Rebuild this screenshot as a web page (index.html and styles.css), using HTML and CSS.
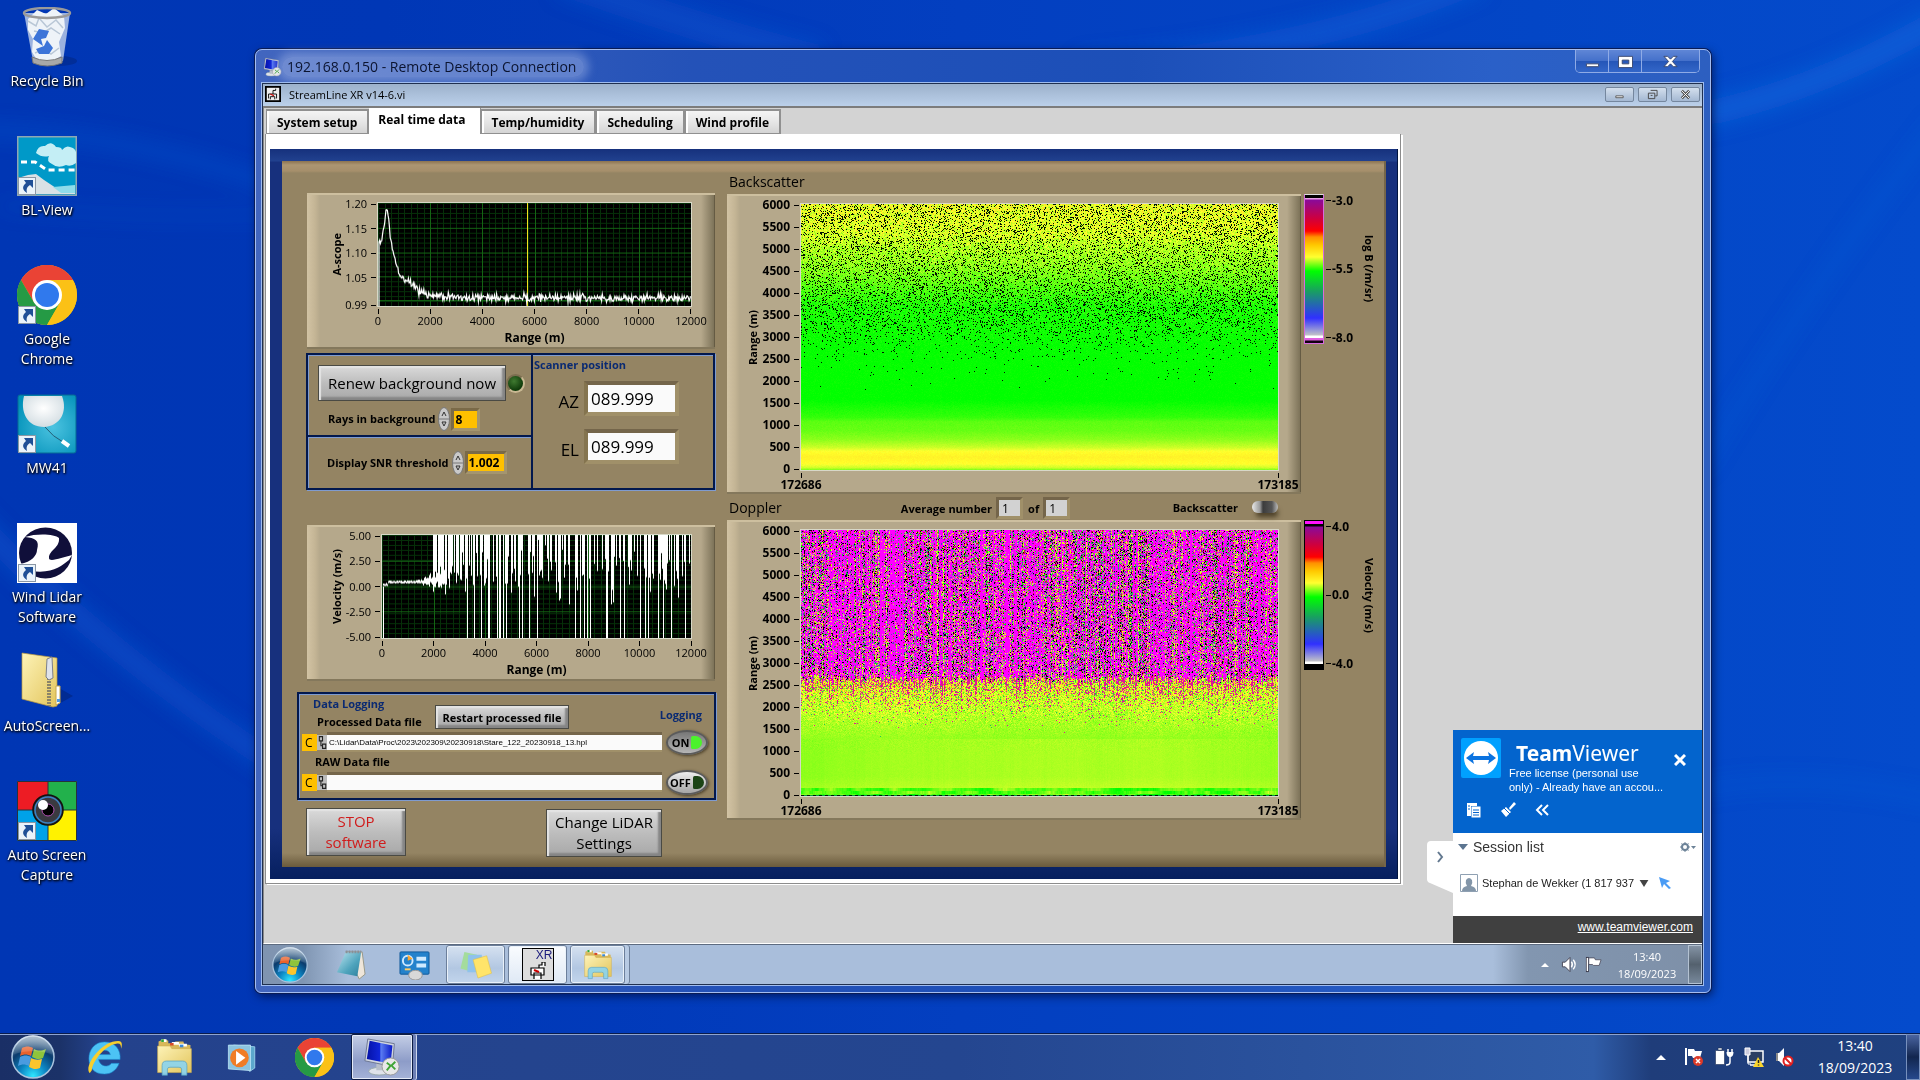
FILE: index.html
```html
<!DOCTYPE html>
<html lang="en">
<head>
<meta charset="utf-8">
<title>Remote Desktop Connection</title>
<link rel="stylesheet" href="styles.css">
</head>
<body>
<svg class="defs" aria-hidden="true">
  <defs>
    <radialGradient id="gOrb" cx=".5" cy=".95" r=".9"><stop offset="0" stop-color="#2fe6ff"/><stop offset=".35" stop-color="#0c86c4"/><stop offset=".7" stop-color="#0b3c6e"/><stop offset="1" stop-color="#5d7f9f"/></radialGradient>
    <linearGradient id="gGloss" x1="0" y1="0" x2="0" y2="1"><stop offset="0" stop-color="#fff" stop-opacity=".75"/><stop offset="1" stop-color="#fff" stop-opacity=".1"/></linearGradient>
    <linearGradient id="gFold" x1="0" y1="0" x2="1" y2="1"><stop offset="0" stop-color="#fdf3b8"/><stop offset="1" stop-color="#e3c55c"/></linearGradient>
    <linearGradient id="gScr" x1="0" y1="0" x2="1" y2="0"><stop offset="0" stop-color="#0512a8"/><stop offset=".5" stop-color="#1026d8"/><stop offset=".55" stop-color="#5b7df2"/><stop offset="1" stop-color="#0a1ac8"/></linearGradient>
    <linearGradient id="gPad" x1="0" y1="0" x2="1" y2="1"><stop offset="0" stop-color="#bfe6f0"/><stop offset=".6" stop-color="#4fa4bd"/><stop offset="1" stop-color="#2c7f9c"/></linearGradient>
    <radialGradient id="gBall" cx=".5" cy=".4" r=".6"><stop offset="0" stop-color="#fff"/><stop offset="1" stop-color="#d3dde2"/></radialGradient>
    <radialGradient id="gTeal" cx=".6" cy=".55" r=".7"><stop offset="0" stop-color="#4cc3e0"/><stop offset="1" stop-color="#0090b8"/></radialGradient>
  </defs>
  <symbol id="orb" viewBox="0 0 44 44">
    <circle cx="22" cy="22" r="21" fill="url(#gOrb)" stroke="#a9c3dd" stroke-width="1.5"/>
    <path d="M11 13c4-2 7-2 11 0l-2 8c-4-2-7-2-11 0z" fill="#e8622c"/>
    <path d="M23 14c4 2 7 2 12 0l-3 9c-4 2-7 1-11-1z" fill="#8fc43c"/>
    <path d="M9 22c4-2 7-2 11 0l-2 9c-4-2-7-2-11 0z" fill="#4a9be0"/>
    <path d="M20 23c4 2 7 2 11 1l-2 9c-4 2-7 1-11-1z" fill="#fcc52c"/>
    <path d="M2 20a20 20 0 0 1 40 0c-10-5-30-5-40 0z" fill="url(#gGloss)" opacity=".7"/>
  </symbol>
  <symbol id="folder" viewBox="0 0 40 44">
    <path d="M2 8V4l6-3 5 2v3h7l1-2h9l1 3 7 1v30H2z" fill="#d8b85a"/>
    <path d="M5 3h6M17 6h8M25 8h9" stroke="#fff" stroke-width="3"/><path d="M5 3h3" stroke="#2fa83a" stroke-width="3"/><path d="M15 7h4" stroke="#d84a2a" stroke-width="3"/><path d="M26 9h4" stroke="#3a8ad8" stroke-width="3"/>
    <path d="M1 9h14l2 3h22v27H1z" fill="url(#gFold)" stroke="#cfae50" stroke-width=".7"/>
    <path d="M6 42V31q0-5 5-5h18q5 0 5 5v11h-6v-7q0-2-3-2H15q-3 0-3 2v7z" fill="#8fd4ea" stroke="#4f9dc0" stroke-width=".8" opacity=".95"/>
  </symbol>
  <symbol id="chrome" viewBox="0 0 60 60">
    <circle cx="30" cy="30" r="30" fill="#fbc116"/>
    <path d="M4 15A30 30 0 0 1 56 15H30L17 37.500z" fill="#ea4335"/>
    <path d="M4 15A30 30 0 0 0 30 60L43 37.500 30 45 17 37.500z" fill="#259a45"/>
    <path d="M56 15H30l13 22.500L30 60A30 30 0 0 0 56 15z" fill="#fbc116"/>
    <circle cx="30" cy="30" r="15" fill="#fff"/><circle cx="30" cy="30" r="12" fill="#3079ed"/>
  </symbol>
  <symbol id="rdp" viewBox="0 0 40 40">
    <ellipse cx="17" cy="35" rx="11" ry="4" fill="#dfe3ea" stroke="#9aa"/>
    <path d="M14 26h7l2 8h-9z" fill="#b8bfca"/>
    <path d="M5 1l28 5-2 24L2 24z" fill="#cfd5e0" stroke="#6b7691"/>
    <path d="M7 3l24 5-2 19L4 22z" fill="url(#gScr)"/>
    <circle cx="29" cy="30" r="9" fill="#e8e8e8" stroke="#999"/>
    <path d="M25 26l4 3-4 5M34 25l-4 4 4 4" fill="none" stroke="#3fa535" stroke-width="2"/>
  </symbol>
  <symbol id="shortcut" viewBox="0 0 18 18">
    <rect x=".5" y=".5" width="17" height="17" fill="#eaf3fa" stroke="#8a97a5"/>
    <path d="M6 3h9v8l-3-3c-3 2-4 4-3 8-5-3-5-7-1-10z" fill="#1f4f96"/>
  </symbol>
</svg>

<div class="desktop">
  <svg class="wallpaper" viewBox="0 0 1920 1033" preserveAspectRatio="none" aria-hidden="true">
    <defs>
      <linearGradient id="wGlow" x1="0" y1="0" x2="1" y2="0"><stop offset="0" stop-color="#0036b4"/><stop offset=".2" stop-color="#0037b6"/><stop offset=".5" stop-color="#033fc0"/><stop offset=".8" stop-color="#0346c6"/><stop offset="1" stop-color="#044bcc"/></linearGradient>
      <filter id="soft"><feGaussianBlur stdDeviation="10"/></filter>
    </defs>
    <rect width="1920" height="1033" fill="url(#wGlow)"/>
    <g fill="none" stroke="#1464dc" filter="url(#soft)">
      <path d="M-40 505Q110 660 300 780" stroke-width="22" opacity=".4"/>
      <path d="M-40 130Q130 130 300 195" stroke-width="12" opacity=".35"/>
      <path d="M0 205Q130 220 300 214" stroke-width="6" opacity=".25"/>
      <path d="M560 -20Q700 30 820 60" stroke-width="30" opacity=".3"/>
      <path d="M1080 70Q1320 50 1480 -20" stroke-width="24" opacity=".5"/>
      <path d="M1700 115Q1820 90 1940 20" stroke-width="24" opacity=".7"/>
      <path d="M1700 470Q1800 300 1940 120" stroke-width="10" opacity=".3"/>
      <path d="M1700 790Q1800 770 1940 800" stroke-width="8" opacity=".4"/>
    </g>
  </svg>

  <nav class="icons" aria-label="Desktop">
    <a class="icon" href="#"><span class="pic"><svg viewBox="0 0 60 60"><ellipse cx="42" cy="54" rx="18" ry="5" fill="#02216e" opacity=".4"/><path d="M7 6h46l-7 48q-16 7-30 0z" fill="#b6c8e6" opacity=".85"/><path d="M11 12l9-9 9 4 8-6 10 8 1 12-6 14 2 14-11 7-12-1-6-10 1-13-5-9z" fill="#eef3f8"/><path d="M11 14l8 5 3-8 8 9 9-7 7 8M17 24l9 2 8-5 9 6M18 46l9-4 7 5 8-6" fill="none" stroke="#b9c7d6" stroke-width="1.500"/><path d="M16 32l6-10 10 2-3 7-5 1 2 7zM27 39l3-6 6 8-4 6-10 0-3-5z" fill="#3c74d8"/><ellipse cx="30" cy="6" rx="23" ry="5" fill="none" stroke="#9a9a9a" stroke-width="2.500"/><path d="M15 50q15 7 30 0v6q-15 6-29 0z" fill="#a8a8a8" stroke="#777"/></svg></span><span class="name">Recycle Bin</span></a>
    <a class="icon" href="#"><span class="pic"><svg viewBox="0 0 60 60"><rect width="60" height="60" fill="#8fa7b3"/><rect x="1.500" y="1.500" width="57" height="57" fill="#0099c8"/><path d="M19 17q2-8 9-7 6-6 11 1 6 0 6 3 4-5 8-3 5 1 6 5v11q-5 4-10 2-8 4-14-1-6-3-3-8-7 2-13-3z" fill="#c4eef5"/><path d="M4 26h14l12 8h28" fill="none" stroke="#fff" stroke-width="3" stroke-dasharray="6 4"/><path d="M1 42l10-3 8-1 8 6 12 8 19-2v8H1z" fill="#d9e1e5"/><path d="M36 51l22-2v8H44z" fill="#8fdcea"/></svg><svg class="cut"><use href="#shortcut"/></svg></span><span class="name">BL-View</span></a>
    <a class="icon" href="#"><span class="pic"><svg><use href="#chrome"/></svg><svg class="cut"><use href="#shortcut"/></svg></span><span class="name">Google Chrome</span></a>
    <a class="icon" href="#"><span class="pic"><svg viewBox="0 0 60 60"><rect x="1" y="1" width="58" height="58" rx="2" fill="url(#gTeal)" stroke="#066b95"/><path d="M7 2h38c6 16-2 30-18 31C10 33 3 18 7 2z" fill="url(#gBall)"/><path d="M28 33q8 10 18 15" fill="none" stroke="#245d75"/><path d="M45 47l7 5" stroke="#fff" stroke-width="4"/></svg><svg class="cut"><use href="#shortcut"/></svg></span><span class="name">MW41</span></a>
    <a class="icon" href="#"><span class="pic"><svg viewBox="0 0 60 60"><rect width="60" height="60" fill="#fff"/><ellipse cx="28.500" cy="30" rx="26.500" ry="25.500" fill="#100f3a"/><path d="M8 14c12-4 30-3 34 1 1 10-10 12-10 20 0 5 14-1 23-3l-3 5c-8 6-16 14-38 11l-11-7c12-2 17-9 17-14 3-10-2-12-12-13z" fill="#fff"/></svg><svg class="cut"><use href="#shortcut"/></svg></span><span class="name">Wind Lidar Software</span></a>
    <a class="icon" href="#"><span class="pic"><svg viewBox="0 0 60 60"><path d="M38 54l18-10-14-8z" fill="#022070" opacity=".5"/><path d="M5 1l35 5v48l-4 1L5 47z" fill="url(#gFold)" stroke="#b9993f" stroke-width=".7"/><path d="M39 34h4v17l-4 2z" fill="#fff" stroke="#c7a84a"/><path d="M40 47h3v3h-3z" fill="#4b9be8"/><path d="M32 8v46" stroke="#8b8468" stroke-width="4" stroke-dasharray="2 1"/><path d="M30 7l5-2 1 21-4 2-3-3z" fill="#dfe3ea" stroke="#7b808b"/></svg></span><span class="name">AutoScreen...</span></a>
    <a class="icon" href="#"><span class="pic"><svg viewBox="0 0 60 60"><path d="M0 0h31v29H0z" fill="#ed1c24"/><path d="M31 0h29v29H31z" fill="#22b14c"/><path d="M0 29h31v31H0z" fill="#00a2e8"/><path d="M31 29h29v31H31z" fill="#fff200"/><path d="M31 0v60M0 29h60M.5.5h59v59H.5z" fill="none" stroke="#26333b"/><circle cx="31" cy="29" r="15" fill="#333" stroke="#111" stroke-width="1.500"/><circle cx="31" cy="29" r="13" fill="#3a3a40" stroke="#3b82c4" stroke-width="1.500"/><circle cx="31" cy="29" r="6" fill="#000" stroke="#b050b0"/><circle cx="26" cy="24" r="5" fill="#fff"/></svg><svg class="cut"><use href="#shortcut"/></svg></span><span class="name">Auto Screen Capture</span></a>
  </nav>

  <main class="rdp-window">
    <header class="rdp-title">
      <svg class="rdp-icon"><use href="#rdp"/></svg>
      <h1>192.168.0.150 - Remote Desktop Connection</h1>
      <div class="win-buttons">
        <button type="button" aria-label="Minimize"><svg viewBox="0 0 16 16"><path d="M1.500 10.500h13v3h-13z" fill="#fff" stroke="#38466e"/></svg></button>
        <button type="button" aria-label="Maximize"><svg viewBox="0 0 16 16"><path fill-rule="evenodd" d="M.5 2.500h15v12H.5zM4.500 6.500h7v4h-7z" fill="#fff" stroke="#38466e"/></svg></button>
        <button type="button" class="wide" aria-label="Close"><svg viewBox="0 0 16 16"><path d="M1 2.500h4l3 3 3-3h4L10 8l5 5.500h-4l-3-3-3 3H1L6 8z" fill="#fff" stroke="#38466e"/></svg></button>
      </div>
    </header>

    <div class="client">
      <header class="app-title">
        <svg class="vi-icon" viewBox="0 0 18 18"><rect x="1" y="1" width="16" height="16" fill="#eee" stroke="#000" stroke-width="2"/><path d="M4 14V9h9v5M6 15v-3h5v3M9 9V5h3V3" fill="none" stroke="#000"/><path d="M6 9l4 2" stroke="#c00" stroke-width="1.500"/></svg>
        <h2>StreamLine XR v14-6.vi</h2>
        <div class="app-buttons">
          <button type="button" aria-label="Minimize panel"><svg viewBox="0 0 12 12"><path d="M2 7.500h8v2H2z" fill="#fff" stroke="#555"/></svg></button>
          <button type="button" aria-label="Restore panel"><svg viewBox="0 0 12 12"><path d="M4 1.500h7v6H9M1.500 4.500h7v6h-7zM4 7h2" fill="none" stroke="#444"/></svg></button>
          <button type="button" aria-label="Close panel"><svg viewBox="0 0 12 12"><path d="M2 2l8 8M10 2l-8 8" stroke="#555" stroke-width="3"/><path d="M2 2l8 8M10 2l-8 8" stroke="#fff"/></svg></button>
        </div>
      </header>

      <div class="app-body">
        <div class="tabs" role="tablist">
          <button type="button" role="tab">System setup</button>
          <button type="button" role="tab" class="active" aria-selected="true">Real time data</button>
          <button type="button" role="tab">Temp/humidity</button>
          <button type="button" role="tab">Scheduling</button>
          <button type="button" role="tab">Wind profile</button>
        </div>
        <section class="tab-page">
          <div class="frame">
            <div class="panel">
              <div class="controls">
                <figure class="graph small ascope">
                  <span class="y-title">A-scope</span>
                  <ol class="y-axis"><li>1.20</li><li>1.15</li><li>1.10</li><li>1.05</li><li class="last">0.99</li></ol>
                  <canvas id="ascope" width="313" height="104"></canvas>
                  <ol class="x-axis"><li>0</li><li>2000</li><li>4000</li><li>6000</li><li>8000</li><li>10000</li><li>12000</li></ol>
                  <figcaption>Range (m)</figcaption>
                </figure>

                <div class="settings">
                  <div class="renew">
                    <div class="line"><button type="button" class="metal big">Renew background now</button><i class="led"></i></div>
                    <div class="line field"><label for="rays">Rays in background</label><svg class="spin" viewBox="0 0 12 24"><ellipse cx="6" cy="12" rx="5.500" ry="11.500" fill="#c9c9c9" stroke="#777"/><path d="M1 12h10" stroke="#777"/><path d="M4 9l2-4 2 4M4 15h4l-2 4z" fill="none" stroke="#333"/></svg><input id="rays" class="amber short" value="8"></div>
                  </div>
                  <div class="snr field"><label for="snr">Display SNR threshold</label><svg class="spin" viewBox="0 0 12 24"><ellipse cx="6" cy="12" rx="5.500" ry="11.500" fill="#c9c9c9" stroke="#777"/><path d="M1 12h10" stroke="#777"/><path d="M4 9l2-4 2 4M4 15h4l-2 4z" fill="none" stroke="#333"/></svg><input id="snr" class="amber" value="1.002"></div>
                  <div class="scanner">
                    <h3>Scanner position</h3>
                    <div class="angle"><label for="az">AZ</label><input id="az" value="089.999"></div>
                    <div class="angle"><label for="el">EL</label><input id="el" value="089.999"></div>
                  </div>
                </div>

                <figure class="graph small velocity">
                  <span class="y-title">Velocity (m/s)</span>
                  <ol class="y-axis"><li>5.00</li><li>2.50</li><li>0.00</li><li>-2.50</li><li>-5.00</li></ol>
                  <canvas id="velocity" width="309" height="104"></canvas>
                  <ol class="x-axis"><li>0</li><li>2000</li><li>4000</li><li>6000</li><li>8000</li><li>10000</li><li>12000</li></ol>
                  <figcaption>Range (m)</figcaption>
                </figure>

                <div class="logging">
                  <div class="log-head">
                    <div><h3>Data Logging</h3><label for="proc">Processed Data file</label></div>
                    <button type="button" class="metal restart">Restart processed file</button>
                    <h3 class="log-title">Logging</h3>
                  </div>
                  <div class="path"><b>C</b><svg viewBox="0 0 8 14"><path d="M1.500 1.500h3v4h-3zM4.500 8.500h3v4h-3zM3 6v4h2" fill="none" stroke="#222"/></svg><input id="proc" value="C:\Lidar\Data\Proc\2023\202309\20230918\Stare_122_20230918_13.hpl"><button type="button" class="oval on">ON<i></i></button></div>
                  <label class="raw" for="raw">RAW Data file</label>
                  <div class="path"><b>C</b><svg viewBox="0 0 8 14"><path d="M1.500 1.500h3v4h-3zM4.500 8.500h3v4h-3zM3 6v4h2" fill="none" stroke="#222"/></svg><input id="raw" value=""><button type="button" class="oval">OFF<i></i></button></div>
                </div>

                <div class="actions">
                  <button type="button" class="metal stop">STOP software</button>
                  <button type="button" class="metal change">Change LiDAR Settings</button>
                </div>
              </div>

              <div class="maps">
                <h2>Backscatter</h2>
                <figure class="graph heat">
                  <span class="y-title">Range (m)</span>
                  <ol class="y-axis"><li>6000</li><li>5500</li><li>5000</li><li>4500</li><li>4000</li><li>3500</li><li>3000</li><li>2500</li><li>2000</li><li>1500</li><li>1000</li><li>500</li><li>0</li></ol>
                  <canvas id="backscatter" width="477" height="266"></canvas>
                  <ol class="x-axis"><li>172686</li><li>173185</li></ol>
                </figure>
                <div class="map-bar">
                  <h2>Doppler</h2>
                  <div class="average"><label for="avg">Average number</label><input id="avg" value="1"><label for="avg-of">of</label><input id="avg-of" value="1"></div>
                  <label class="mode" for="mode">Backscatter</label><input type="checkbox" id="mode" class="toggle">
                </div>
                <figure class="graph heat">
                  <span class="y-title">Range (m)</span>
                  <ol class="y-axis"><li>6000</li><li>5500</li><li>5000</li><li>4500</li><li>4000</li><li>3500</li><li>3000</li><li>2500</li><li>2000</li><li>1500</li><li>1000</li><li>500</li><li>0</li></ol>
                  <canvas id="doppler" width="477" height="266"></canvas>
                  <ol class="x-axis"><li>172686</li><li>173185</li></ol>
                </figure>
              </div>

              <div class="scales">
                <div class="scale"><i class="ramp ramp-b"></i><ol><li>-3.0</li><li>-5.5</li><li>-8.0</li></ol><span>log B (/m/sr)</span></div>
                <div class="scale"><i class="ramp ramp-v"></i><ol><li>4.0</li><li>0.0</li><li>-4.0</li></ol><span>Velocity (m/s)</span></div>
              </div>
            </div>
          </div>
        </section>

        <aside class="teamviewer">
          <button type="button" class="tv-tab" aria-label="Collapse"><svg viewBox="0 0 26 52"><path d="M26 0H4Q0 0 0 4v34q0 3 3 4l23 10z" fill="#fff"/><path d="M11 11l4 5-4 5" fill="none" stroke="#62788f" stroke-width="2"/></svg></button>
          <div class="tv-head">
            <svg class="tv-logo" viewBox="0 0 40 40"><rect width="40" height="40" rx="2" fill="#00a0ff"/><circle cx="20" cy="20" r="17" fill="#fff"/><path d="M5 20l8-6-1 4h16l-1-4 8 6-8 6 1-4H12l1 4z" fill="#0b73e0"/></svg>
            <div class="tv-text"><strong><b>Team</b>Viewer</strong><p>Free license (personal use<br>only) - Already have an accou...</p></div>
            <button type="button" class="tv-close" aria-label="Close TeamViewer"><svg viewBox="0 0 12 12"><path d="M1 1l10 10M11 1L1 11" stroke="#fff" stroke-width="3"/></svg></button>
          </div>
          <div class="tv-tools">
            <button type="button" aria-label="Copy"><svg viewBox="0 0 16 16"><path d="M1 1h10v3H5v10H1z" fill="#fff"/><path d="M5.500 4.500h9v11h-9z" fill="#fff"/><path d="M7 8h6M7 10.500h6M7 13h6M2 4h2M2 7h2" stroke="#0364cd"/></svg></button>
            <button type="button" aria-label="Brush"><svg viewBox="0 0 16 16"><path d="M1 9l5-4 5 5-5 5zM9 6l5-6 2 2-6 6z" fill="#fff"/><path d="M4 6l6 6" stroke="#0364cd"/></svg></button>
            <button type="button" aria-label="Fold"><svg viewBox="0 0 16 16"><path d="M8 3L3 8l5 5M14 3L9 8l5 5" fill="none" stroke="#fff" stroke-width="2"/></svg></button>
          </div>
          <div class="tv-session"><svg viewBox="0 0 10 8"><path d="M0 1h10L5 7z" fill="#5c7590"/></svg><h3>Session list</h3><svg class="gear" viewBox="0 0 16 10"><circle cx="5" cy="5" r="3" fill="none" stroke="#6d8398" stroke-width="2"/><path d="M5 0v10M0 5h10M1.500 1.500l7 7M8.500 1.500l-7 7" stroke="#6d8398" stroke-dasharray="2 6"/><path d="M11 4h5l-2.500 3z" fill="#6d8398"/></svg></div>
          <div class="tv-user"><svg class="avatar" viewBox="0 0 18 18"><path d="M.5.5h17v17H.5z" fill="#fff" stroke="#8fa0b2"/><path d="M2 17q0-4 5-5-2-3-1-6 3-4 6 0 1 3-1 6 5 1 5 5z" fill="#8295a8"/></svg><span>Stephan de Wekker (1 817 937</span><svg class="drop" viewBox="0 0 10 8"><path d="M0 0h10L5 8z" fill="#444"/></svg><svg class="arrow" viewBox="0 0 12 12"><path d="M0 0l11 4-4 2 5 5-2 1-5-5-2 4z" fill="#4a9cf5"/></svg></div>
          <a class="tv-link" href="#">www.teamviewer.com</a>
        </aside>
      </div>

      <footer class="remote-bar">
        <button type="button" class="start" aria-label="Remote Start"><svg><use href="#orb"/></svg></button>
        <button type="button" class="pin" aria-label="Notepad"><svg viewBox="0 0 32 32"><path d="M10 3h17l3 23-6 5-2-4z" fill="#eee6da" stroke="#998" /><path d="M10 3h16l-4 25L1 24z" fill="url(#gPad)"/><path d="M10 3h16" stroke="#8a8f96" stroke-width="3" stroke-dasharray="2 1"/></svg></button>
        <button type="button" class="pin" aria-label="Control Panel"><svg viewBox="0 0 32 32"><rect x="1" y="3" width="30" height="23" rx="1" fill="#2482cc" stroke="#125a9a"/><circle cx="9" cy="12" r="5" fill="none" stroke="#cfe9ff" stroke-width="2"/><path d="M9 12V6l5 4z" fill="#ffa62c"/><path d="M18 10h10M18 17h10" stroke="#cfeaff" stroke-width="4"/><path d="M6 21h6" stroke="#fc6" stroke-width="2"/><ellipse cx="17" cy="27" rx="7" ry="5" fill="#d8d8d8" stroke="#999"/></svg></button>
        <button type="button" class="task" aria-label="Sticky Notes"><svg viewBox="0 0 32 32"><path d="M4 3l13 3-4 18L0 20z" fill="#a4dc9c"/><path d="M8 6h14v18H7z" fill="#8fc2ec"/><path d="M13 11l14-4 5 18-14 5z" fill="#ffe46a" stroke="#e0bd3c" stroke-width=".5"/></svg></button>
        <button type="button" class="task current" aria-label="StreamLine XR"><span class="xr">XR<svg viewBox="0 0 18 18"><path d="M1 6h13v7H1zM4 17v-6h7v6M9 6V3h3V0h3v4" fill="#fff" stroke="#000" stroke-width="1.200"/><path d="M4 8l5 2" stroke="#c00" stroke-width="2"/></svg></span></button>
        <button type="button" class="task stack" aria-label="Remote Explorer"><svg><use href="#folder"/></svg></button>
        <div class="tray">
          <svg class="up" viewBox="0 0 10 6"><path d="M0 6l5-5 5 5z" fill="#fff"/></svg>
          <svg viewBox="0 0 18 18"><path d="M1.500 6.500h3l5-5v15l-5-5h-3z" fill="#fff" stroke="#445"/><path d="M11 6q2 3 0 6M13 4q4 5 0 10" fill="none" stroke="#fff" stroke-width="1.500"/></svg>
          <svg viewBox="0 0 18 18"><path d="M2.500 1v16" stroke="#334" stroke-width="3"/><path d="M2.500 2v14" stroke="#fff" stroke-width="1.500"/><path d="M4 2h6l1 2h6l-2 6H9l-1-1H4z" fill="#fff" stroke="#445" stroke-width=".8"/></svg>
          <time>13:40<br>18/09/2023</time>
        </div>
        <button type="button" class="peek" aria-label="Remote show desktop"></button>
      </footer>
    </div>
  </main>
</div>

<footer class="taskbar">
  <button type="button" class="start" aria-label="Start"><svg><use href="#orb"/></svg></button>
  <button type="button" class="pin" aria-label="Internet Explorer"><svg viewBox="0 0 40 40"><path d="M20 4c11 0 17 8 16 18H14c1 7 10 9 13 4h8c-3 8-9 11-15 11C9 37 4 30 4 21S10 4 20 4zm-6 13h12c-1-6-11-6-12 0z" fill="#4cc3f5" stroke="#1a85cc" stroke-width=".6"/><path d="M5 36C-2 30 16 3 34 3c5 0 4 5 3 8 0-4-1-6-5-5C20 8 8 24 7 33z" fill="#f7cf2e"/></svg></button>
  <button type="button" class="pin" aria-label="Explorer"><svg><use href="#folder"/></svg></button>
  <button type="button" class="pin media" aria-label="Media Player"><svg viewBox="0 0 40 40"><path d="M10 6l25 2v25l-6 4z" fill="#5ca8cc" stroke="#9fd6ee"/><path d="M4 6h26v30L4 34z" fill="#8cc4e0" stroke="#b8e2f4"/><circle cx="17" cy="21" r="11" fill="#f07c26"/><path d="M13 13l11 8-11 8z" fill="#fff"/></svg></button>
  <button type="button" class="pin" aria-label="Chrome"><svg><use href="#chrome"/></svg></button>
  <button type="button" class="task current stack" aria-label="Remote Desktop"><svg><use href="#rdp"/></svg></button>
  <div class="tray">
    <svg class="up" viewBox="0 0 10 6"><path d="M0 6l5-5 5 5z" fill="#fff"/></svg>
    <svg viewBox="0 0 20 20"><path d="M2 1v17" stroke="#fff" stroke-width="2"/><path d="M4 2h6l1 2h7l-2 7H9L8 9H4z" fill="#fff"/><circle cx="14" cy="14" r="5" fill="#dc3a28"/><path d="M12 12l4 4M16 12l-4 4" stroke="#fff" stroke-width="1.500"/></svg>
    <svg viewBox="0 0 20 20"><path d="M1.500 3.500h9v14h-9zM4 1h4v2H4z" fill="#fff" stroke="#1c2f55" stroke-width=".6"/><path d="M14 2v4M18 2v4M16 9v6q0 3-4 3" stroke="#fff" stroke-width="1.500" fill="none"/><path d="M12.500 5h7q0 5-3.500 5t-3.500-5z" fill="#fff"/></svg>
    <svg viewBox="0 0 20 20"><path d="M4 4h15v11H4zM6 18h9" fill="#2b3f63" stroke="#fff" stroke-width="1.500"/><path d="M1 1h5v7H1z" fill="#ccd" stroke="#fff"/><path d="M4 8v9h3" stroke="#fff" fill="none"/><path d="M14 10l6 10H9z" fill="#fbd52b"/><path d="M14.500 13v3M14.500 17.500v1" stroke="#222" stroke-width="1.500"/></svg>
    <svg viewBox="0 0 20 20"><path d="M2 6h3l5-5v18l-5-5H2z" fill="#fff"/><path d="M2 6h2v8H2z" fill="#8b8b8b"/><circle cx="14" cy="14" r="4.500" fill="#fff" stroke="#e01f1f" stroke-width="2"/><path d="M11 11l6 6" stroke="#e01f1f" stroke-width="2"/></svg>
    <time>13:40<br>18/09/2023</time>
  </div>
  <button type="button" class="peek" aria-label="Show desktop"></button>
</footer>
<script src="plots.js"></script>
</body>
</html>
```
FILE: styles.css
```css
* { box-sizing: border-box; }
body, h1, h2, h3, p, ol, figure { margin: 0; padding: 0; }
h1, h2, h3 { font-weight: 400; }
ol { list-style: none; }
svg { display: block; flex: none; }
button, input { font: inherit; color: inherit; margin: 0; }
button { padding: 0; background: none; border: 0; border-radius: 0; }
input { border: 0; min-width: 0; border-radius: 0; }

body {
  min-height: 100vh;
  display: flex;
  flex-direction: column;
  background: #0036b4;
  font-family: "Open Sans", "Noto Sans", sans-serif;
  font-size: 12px;
  color: #000;
}
.defs { position: absolute; width: 0; height: 0; }

/* Desktop */
.desktop { position: relative; flex: 1; display: flex; overflow: hidden; }
.wallpaper { position: absolute; inset: 0; width: 100%; height: 100%; }
.icons { position: relative; flex: none; width: 255px; padding: 7px 0 0 2px; }
.icon { display: block; width: 90px; height: 129px; color: #fff; text-decoration: none; text-align: center; }
.pic { position: relative; display: block; width: 60px; height: 60px; margin: 0 auto; }
.pic svg { width: 60px; height: 60px; }
.pic .cut { position: absolute; left: 1px; bottom: 1px; width: 18px; height: 18px; }
.name { display: block; margin-top: 4px; font-size: 14px; line-height: 20px; text-shadow: 1px 1px 2px #000, 0 1px 3px #000; }

/* Outer window */
.rdp-window {
  position: relative;
  flex: 1;
  min-width: 0;
  margin: 49px 209px 40px 0;
  padding: 0 7px 7px 6px;
  display: flex;
  flex-direction: column;
  background: linear-gradient(90deg, #4266bf 0, #2452b8 30%, #1c4fb8 60%, #2a60c8 85%, #2d5fc0 100%);
  border: 1px solid #a5bdf0;
  border-radius: 7px 7px 6px 6px;
  box-shadow: 0 0 0 1px #0a1c55, 2px 3px 10px rgba(0, 0, 30, .6);
}
.rdp-title { display: flex; align-items: center; height: 33px; padding-left: 1px; }
.rdp-icon { width: 19px; height: 22px; }
.rdp-title h1 { padding: 0 8px 0 5px; font-size: 14px; line-height: 20px; color: #0b1430; border-radius: 10px; background: rgba(190, 205, 240, .36); box-shadow: 0 0 9px 5px rgba(190, 205, 240, .36); }
.win-buttons { display: flex; align-self: flex-start; margin: 0 3px 0 auto; border: 1px solid #8fabe6; border-top: 0; border-radius: 0 0 5px 5px; overflow: hidden; }
.win-buttons button { display: flex; align-items: center; justify-content: center; width: 33px; height: 22px; background: linear-gradient(#5f86d6, #4470ca 50%, #2556b8 51%, #3366c8); border-right: 1px solid #8fabe6; }
.win-buttons .wide { width: 57px; border-right: 0; }
.win-buttons svg { width: 15px; height: 15px; }

.client { flex: 1; display: flex; flex-direction: column; border: 1px solid #20304f; outline: 1px solid #9fbcf0; background: #d3d3d3; }
.app-title { display: flex; align-items: center; height: 24px; padding: 0 2px 2px 2px; background: linear-gradient(#9cb1cb, #bbd0ea); border-bottom: 2px solid #7c7c7c; }
.vi-icon { width: 16px; height: 16px; }
.app-title h2 { margin-left: 8px; font-size: 11px; }
.app-buttons { display: flex; gap: 4px; margin-left: auto; }
.app-buttons button { display: flex; align-items: center; justify-content: center; width: 29px; height: 15px; border: 1px solid #75879e; border-radius: 2px; background: linear-gradient(#d3dfed, #a4b8d2); }
.app-buttons svg { width: 11px; height: 11px; }

/* Application */
.app-body { position: relative; flex: 1; padding: 0 301px 59px 1px; border-left: 1px solid #888; border-bottom: 1px solid #fff; }
.tabs { display: flex; align-items: flex-end; height: 26px; padding-left: 1px; }
.tabs button { height: 25px; padding: 0 10px; font-weight: 700; font-size: 12px; background: linear-gradient(#f4f4f4 0, #e6e6e6 50%, #d4d4d4); border: 1px solid #909090; border-width: 2px 2px 1px 1px; box-shadow: inset 2px 0 0 #fff; }
.tabs .active { height: 26px; padding: 0 14px 4px 9px; background: #fff; border: 0; border-right: 1px solid #909090; }
.tab-page { padding: 15px 2px 4px 4px; background: #fff; border: 1px solid #8c8c8c; border-top: 0; box-shadow: 2px 1px 0 #fff; }
.frame { padding: 12px 11px 12px 12px; background: linear-gradient(#16317d, #21418f 12px, #17307d 13px, #17307d 680px, #061f5e 100%); border-right: 1px solid #00143f; }
.panel {
  display: grid;
  grid-template-columns: 419px minmax(0, 1fr) 83px;
  padding: 0 0 10px 15px;
  background: linear-gradient(#8b7350 0, #ac9672 4px, #a68f6b 10px, #948463 12px, #948463 calc(100% - 14px), #6a5a3c 100%);
  border-right: 2px solid #75664a;
}
.controls { padding-top: 32px; }

/* Graphs */
.graph { display: grid; background: linear-gradient(90deg, #d2c3a4 0, #c4b595 8px, #b5a88b 13px, #b5a88b calc(100% - 14px), #7d7359 calc(100% - 1px), #4d432e 100%); border-top: 2px solid #cdbf9f; border-bottom: 2px solid #84785c; }
.graph canvas { grid-area: plot; display: block; width: 100%; height: 100%; outline: 1px solid #d8d8c8; }
.y-title { grid-area: title; justify-self: center; align-self: center; writing-mode: vertical-rl; transform: rotate(180deg); font-weight: 700; font-size: 11px; line-height: 14px; white-space: nowrap; }
.y-axis { grid-area: yaxis; display: flex; flex-direction: column; justify-content: space-between; margin: -6px 0; text-align: right; line-height: 14px; }
.y-axis li { display: flex; align-items: center; justify-content: flex-end; height: 14px; }
.y-axis li::after { content: ""; width: 5px; height: 1px; margin: 0 2px 0 4px; background: #000; }
.x-axis { grid-area: xaxis; display: flex; justify-content: space-between; }
.x-axis li { display: flex; flex-direction: column; align-items: center; width: 0; line-height: 14px; }
.x-axis li::before { content: ""; width: 1px; height: 5px; background: #000; }
.graph figcaption { grid-area: caption; text-align: center; font-weight: 700; line-height: 16px; }
.small { height: 156px; margin: 0 1px 0 10px; padding: 8px 24px 0 22px; grid-template: "title yaxis plot" 103px ". . xaxis" 24px ". . caption" 17px / 16px 33px minmax(0, 1fr); }
.small .y-axis, .small .x-axis { font-size: 11px; }
.small .x-axis { padding-top: 3px; }
.velocity { grid-template-columns: 16px 37px minmax(0, 1fr); }
.y-axis .last { margin-top: 3px; }
.heat { height: 300px; padding: 8px 23px 0 18px; grid-template: "title yaxis plot" 266px ". . xaxis" 22px / 16px 40px minmax(0, 1fr); font-weight: 700; font-size: 12px; }
.heat .x-axis { padding-top: 3px; }

/* Settings */
.settings { display: grid; grid-template: "renew scanner" 82px "snr scanner" 1fr / 225px 1fr; height: 137px; margin: 4px 1px 35px 9px; border: 2px solid #02184e; box-shadow: inset 1px 1px 0 #7f9bd0, 1px 1px 0 #7f9bd0; }
.renew { grid-area: renew; padding: 10px 0 0 10px; border-bottom: 2px solid #02184e; border-right: 2px solid #02184e; box-shadow: 0 1px 0 #7f9bd0; }
.snr { grid-area: snr; padding: 0 0 0 19px; border-right: 2px solid #02184e; }
.scanner { grid-area: scanner; padding: 2px 0 0 1px; }
.line { display: flex; align-items: center; }
.line.field { margin-top: 6px; padding-left: 10px; }
.metal { background: linear-gradient(#dadada, #bdbdbd 50%, #a8a8a8); border: 1px solid #4a4a44; box-shadow: inset 2px 2px 1px #e4e4e4, inset -3px -3px 2px #858585; }
.big { width: 188px; height: 36px; font-size: 15px; white-space: nowrap; }
.led { width: 19px; height: 19px; border-radius: 50%; border: 2px solid #7b6e50; border-right-color: #c9b993; border-bottom-color: #c9b993; background: radial-gradient(circle at 40% 35%, #3f7a30, #0e3a0a 70%); }
.field { display: flex; align-items: center; font-weight: 700; font-size: 11px; }
.field label { line-height: 16px; white-space: nowrap; }
.spin { width: 12px; height: 24px; margin: 0 1px 0 3px; }
.amber { width: 42px; height: 23px; padding: 0 1px; font-size: 12px; background: #ffc000; border: 3px solid #7a6a48; border-right-color: #a4956f; border-bottom-color: #a4956f; }
.amber.short { width: 29px; }
h3 { font-weight: 700; line-height: 16px; color: #0a2a72; font-size: 11px; }
.angle { display: flex; align-items: center; justify-content: flex-end; height: 36px; margin: 7px 34px 0 0; }
.angle + .angle { margin-top: 12px; }
.angle label { margin-right: 5px; padding-top: 6px; font-size: 17px; }
.angle input { width: 95px; height: 35px; padding: 0 3px; font-size: 17px; background: #fafafa; border: 4px solid #74654a; border-right-color: #a09069; border-bottom-color: #a09069; border-left-color: #84744f; }

/* Data logging */
.logging { height: 108px; margin-top: 11px; border: 2px solid #02184e; box-shadow: inset 1px 1px 0 #7f9bd0, 1px 1px 0 #7f9bd0; padding: 2px 12px 0 3px; }
.log-head { display: flex; height: 35px; }
.log-head > div { width: 133px; padding-left: 11px; }
.log-head label { display: block; margin: 2px 0 0 4px; font-weight: 700; font-size: 11px; line-height: 16px; }
.restart { width: 134px; height: 24px; margin-top: 9px; font-weight: 700; font-size: 11px; white-space: nowrap; }
.log-title { margin: 11px 0 0 auto; }
.path { display: flex; align-items: center; height: 22px; }
.path b { width: 15px; line-height: 17px; padding-left: 3px; background: #ffc000; font-size: 12px; font-weight: 400; }
.path svg { width: 10px; height: 15px; background: #bbb; }
.path input { flex: 1; height: 20px; padding: 0 2px; font-family: "Liberation Sans", sans-serif; font-size: 8px; background: #fafafa; border: solid #74654a; border-width: 3px 0 2px 0; border-bottom-color: #a09069; }
.raw { display: block; margin: 1px 0 1px 13px; font-size: 11px; line-height: 16px; font-weight: 700; }
.oval { display: flex; align-items: center; justify-content: center; gap: 2px; width: 42px; height: 25px; margin: 0 -6px 0 4px; border-radius: 50%; border: 2px solid #5b5b5b; background: linear-gradient(#eee, #a5a5a5); font-size: 11px; font-weight: 700; box-shadow: 1px 1px 3px #4b3f28; }
.oval.on { background: linear-gradient(#777, #b5b5b5); }
.oval i { width: 11px; height: 13px; border-radius: 2px 8px 8px 2px; background: #1c4416; }
.oval.on i { background: #4cf22c; }
.actions { display: flex; justify-content: space-between; align-items: flex-start; margin: 8px 54px 0 9px; font-size: 15px; line-height: 21px; }
.stop { width: 100px; height: 48px; padding: 0 16px; color: #d01c1c; }
.change { width: 116px; height: 48px; margin-top: 1px; }

/* Heat maps */
.maps { padding: 10px 0 0 11px; }
.maps > h2 { padding: 0 0 2px 2px; font-size: 14px; line-height: 21px; }
.map-bar { display: flex; align-items: center; height: 26px; padding: 0 23px 0 2px; font-size: 11px; font-weight: 700; }
.map-bar h2 { font-size: 14px; }
.average { display: flex; align-items: center; margin: 2px auto 0 119px; }
.average input { width: 27px; height: 22px; margin: 0 5px 0 4px; padding: 0 3px; font-size: 12px; background: #d2d2d2; border: 3px solid #74654a; border-right-color: #a09069; border-bottom-color: #a09069; font-weight: 400; }
.toggle { appearance: none; width: 26px; height: 12px; margin-left: 14px; border-radius: 6px; background: linear-gradient(90deg, #e8e8e8 0, #999 8px, #3c3c3c 11px, #555 20px, #bbb 100%); box-shadow: 2px 6px 5px -2px #4b3f28; }

/* Colour scales */
.scales { display: flex; flex-direction: column; gap: 176px; padding: 33px 0 0 3px; font-size: 12px; font-weight: 700; }
.scale { display: flex; height: 150px; }
.ramp { width: 20px; border: 1px solid #d86ae0; }
.ramp-b { border-top-color: #ddd; background: linear-gradient(#000 0, #000 3px, #e6a0e6 3px, #e6a0e6 4px, #8a0a9a 5px, #d0003c 24px, #ff0000 36px, #ff9000 42px, #ffc800 50px, #ffff30 62px, #00ff00 76px, #18a060 96px, #3030ff 123px, #c0c0c8 140px, #fff 141px, #fff 143px, #e060e0 143px, #e060e0 145px, #100010 146px); }
.ramp-v { border-color: #000; background: linear-gradient(#ff10ff 0, #ff10ff 3px, #000 3px, #000 5px, #8a0a9a 6px, #d0003c 24px, #ff0000 36px, #ff9000 42px, #ffc800 50px, #ffff30 62px, #00ff00 76px, #18a060 96px, #3030ff 123px, #c0c0c8 140px, #fff 141px, #fff 143px, #000 143px); }
.scale ol { display: flex; flex-direction: column; justify-content: space-between; width: 32px; padding-left: 2px; margin: -4px 0; }
.scale li { display: flex; align-items: center; height: 21px; line-height: 16px; white-space: nowrap; }
.scale li::before { content: ""; width: 5px; height: 1px; background: #000; margin-right: 1px; }
.scale span { align-self: center; margin: 0 0 0 6px; writing-mode: vertical-rl; font-size: 11px; line-height: 14px; white-space: nowrap; }

/* TeamViewer popup lies over the application */
.teamviewer { position: absolute; right: 0; bottom: 0; width: 249px; height: 213px; display: flex; flex-direction: column; background: #fff; color: #222; }
.tv-tab { position: absolute; left: -26px; top: 111px; width: 26px; height: 52px; }
.tv-tab svg { width: 26px; height: 52px; }
.tv-head { display: flex; height: 64px; padding: 8px 16px 0 8px; background: #0364cd; color: #fff; }
.tv-logo { width: 40px; height: 40px; }
.tv-text { flex: 1; padding: 2px 0 0 8px; font-family: "Noto Sans", sans-serif; }
.tv-text strong { display: block; padding-left: 7px; font-size: 21px; line-height: 26px; font-weight: 400; }
.tv-text p { font-family: "Liberation Sans", sans-serif; font-size: 11px; line-height: 14px; white-space: nowrap; }
.tv-close { width: 12px; height: 12px; margin-top: 16px; }
.tv-close svg { width: 12px; height: 12px; }
.tv-tools { display: flex; gap: 18px; height: 39px; padding: 8px 0 0 13px; background: #0364cd; }
.tv-tools button, .tv-tools svg { width: 16px; height: 16px; }
.tv-session { display: flex; align-items: center; height: 28px; padding: 0 6px 0 5px; }
.tv-session svg { width: 10px; height: 8px; }
.tv-session h3 { margin-left: 5px; font: 14px "Liberation Sans", sans-serif; color: #333; }
.tv-session .gear { width: 16px; height: 10px; margin-left: auto; }
.tv-user { display: flex; align-items: center; height: 44px; margin-bottom: auto; padding-left: 7px; font: 11px "Liberation Sans", sans-serif; }
.avatar { width: 18px; height: 18px; }
.tv-user span { width: 151px; margin: 0 6px 0 4px; white-space: nowrap; }
.drop { width: 10px; height: 7px; }
.arrow { width: 12px; height: 12px; margin-left: 10px; }
.tv-link { height: 27px; padding-right: 9px; background: #404040; color: #fff; font: 12px/23px "Liberation Sans", sans-serif; text-align: right; }

/* Task bars */
.remote-bar, .taskbar { display: flex; align-items: stretch; }
.remote-bar { height: 40px; border-top: 1px solid #5d6b80; background: linear-gradient(90deg, #8094b0 0, #7f95b2 40px, #a9bedb 85px, #a9bedb 1230px, #8296b0 1265px, #7e90a8 100%); }
.remote-bar button, .taskbar button { display: flex; align-items: center; justify-content: center; flex: none; }
.remote-bar .start { width: 54px; }
.remote-bar .start svg { width: 36px; height: 36px; }
.remote-bar .pin { width: 64px; padding-left: 4px; }
.remote-bar .pin + .pin { width: 62px; padding-left: 4px; }
.remote-bar .pin svg { width: 31px; height: 31px; }
.remote-bar .task { width: 59px; margin-left: 3px; border: 1px solid #6c7f9b; border-radius: 3px; background: linear-gradient(#d5e1f0, #b2c7e2 60%, #c2d5ec); box-shadow: inset 0 0 0 1px #e9f1fa; }
.remote-bar .current { background: linear-gradient(#fafcff, #dfe9f5); }
.remote-bar .stack { width: 55px; box-shadow: inset 0 0 0 1px #e9f1fa, 4px 0 0 #b7cae3, 5px 0 0 #6c7f9b; }
.remote-bar .task svg { width: 32px; height: 31px; }
.remote-bar .task .xr { display: block; width: 32px; height: 33px; border: 1px solid #000; background: #ddd; color: #1a1a7c; font: 12px/13px "Liberation Sans", sans-serif; text-align: right; }
.remote-bar .xr svg { width: 18px; height: 18px; margin-left: 7px; }
.tray { display: flex; align-items: center; margin-left: auto; color: #fff; text-align: center; }
.remote-bar .tray { gap: 7px; }
.remote-bar .tray svg { width: 17px; height: 17px; }
.remote-bar .tray .up { width: 8px; height: 5px; margin-right: 5px; }
.remote-bar time { width: 76px; font-size: 11px; line-height: 17px; }
.remote-bar .peek { width: 14px; margin-left: 3px; border: 1px solid #b4c2d2; background: linear-gradient(#8493a5, #54616e 50%, #77889b); }

.taskbar { position: relative; height: 48px; padding-bottom: 1px; border-top: 1px solid #0a1c4c; box-shadow: inset 0 1px 0 #8ea4d0; background: linear-gradient(90deg, #1a2f66 0, #1b3268 60px, #24428c 100px, #244690 50%, #2f5ca8 83%, #1f3d7a 86%, #1f4180 100%); }
.taskbar .start { width: 66px; }
.taskbar .start svg { width: 44px; height: 44px; }
.taskbar .pin { width: 70px; padding-left: 6px; }
.taskbar .pin svg { width: 39px; height: 39px; }
.taskbar .media { padding-left: 2px; }
.taskbar .media svg { width: 34px; height: 34px; }
.taskbar .task { width: 62px; margin-left: 5px; border: 1px solid #0c1c44; border-radius: 2px; background: linear-gradient(#c4cee6, #8d9cc8 60%, #a5b3d8); box-shadow: inset 0 0 0 1px #e4eaf6, 3px 0 0 #6d7fb4, 4px 0 0 #cfd8ee; }
.taskbar .task svg { width: 38px; height: 38px; }
.taskbar .tray { gap: 10px; }
.taskbar .tray svg { width: 20px; height: 20px; }
.taskbar .tray .up { width: 10px; height: 6px; margin-right: 8px; }
.taskbar time { width: 102px; font-size: 14px; line-height: 22px; }
.taskbar .peek { width: 14px; border: 1px solid #7790bd; background: linear-gradient(#4a64a0, #12264f 50%, #26488c); }
```
FILE: plots.js
```js
// Small seeded generator so that every load draws the same traces
let seed = 20230918;
function rnd() {
  seed = (seed * 1664525 + 1013904223) >>> 0;
  return seed / 4294967296;
}
const noise = () => rnd() + rnd() + rnd() - 1.5;
const clamp = (v, a, b) => Math.max(a, Math.min(b, v));

function lerpTable(table, x) {
  for (let i = 1; i < table.length; i++) {
    if (x <= table[i][0]) {
      const [x0, y0] = table[i - 1], [x1, y1] = table[i];
      return y0 + (y1 - y0) * (x - x0) / (x1 - x0);
    }
  }
  return table[table.length - 1][1];
}

// Slowly wandering series, one value per column
function wander(n, keep, step) {
  const out = [];
  let v = 0;
  for (let i = 0; i < n; i++) {
    v = v * keep + noise() * step;
    out.push(v);
  }
  return out;
}

function grid(ctx, w, h, majorY) {
  ctx.fillStyle = '#000';
  ctx.fillRect(0, 0, w, h);
  ctx.fillStyle = '#063009';
  for (let i = 0; i < 48; i++) ctx.fillRect(Math.round(i * w / 48), 0, 1, h);
  for (let i = 0; i < 21; i++) ctx.fillRect(0, Math.round(i * h / 21), w, 1);
  ctx.fillStyle = '#146414';
  for (let i = 1; i < 6; i++) ctx.fillRect(Math.round(i * w / 6), 0, 1, h);
  majorY.forEach(y => ctx.fillRect(0, y, w, 1));
}

function drawAscope() {
  const c = document.getElementById('ascope'), g = c.getContext('2d');
  const w = c.width, h = c.height;
  grid(g, w, h, [25, 50, 74, 98]);
  g.fillStyle = '#f2e21c';
  g.fillRect(149, 0, 1, h);
  const curve = [[0, 1.11], [150, 1.13], [350, 1.19], [500, 1.12], [750, 1.065], [1000, 1.043], [1200, 1.045], [1600, 1.018], [2200, 1.012], [3000, 1.009], [3500, 1.007], [12000, 1.006]];
  g.strokeStyle = '#fff';
  g.lineWidth = 1.2;
  g.beginPath();
  g.moveTo(1, h);
  for (let x = 1; x < w; x += 0.7) {
    const v = lerpTable(curve, x / w * 12000) + noise() * 0.008;
    g.lineTo(x, (1.20 - v) / 0.21 * h);
  }
  g.stroke();
}

function drawVelocity() {
  const c = document.getElementById('velocity'), g = c.getContext('2d');
  const w = c.width, h = c.height;
  grid(g, w, h, [26, 52, 77]);
  const y = v => (5 - v) / 10 * h;
  g.fillStyle = '#fff';
  g.fillRect(1, y(0), 1, h);
  for (let x = 1; x < w; x++) {
    const r = x / w * 12000;
    if (r < 2500) {
      const spread = r < 1300 ? 0.12 : 0.12 + (r - 1300) / 1200 * 0.9;
      const mid = r < 200 ? 0.2 : 0.45 + Math.max(0, r - 1500) / 2500;
      const a = mid + spread * (0.3 + rnd()), b = mid - spread * (0.3 + rnd());
      g.fillRect(x, y(a), 1, Math.max(2, y(b) - y(a)));
    }
    if (r > 1980) {
      const p = r < 3100 ? 0.8 : 0.52;
      if (rnd() < p) g.fillRect(x, 0, 1, y(r < 3100 ? noise() * 1.5 + 0.6 : clamp(1.3 + noise() * 3, -2, 4.6)));
      if (r > 3000 && rnd() < 0.12) g.fillRect(x, 0, 1, h);
    }
  }
}

// t: 0 green, 1 yellow, above 1 towards orange and red
function warm(t) {
  t = clamp(t, 0, 2);
  return t <= 1 ? [255 * t, 255, 48 * t] : [255, 255 - 230 * (t - 1), 40 * (2 - t)];
}

function paint(id, colour) {
  const c = document.getElementById(id), g = c.getContext('2d');
  const img = g.createImageData(c.width, c.height);
  for (let y = 0; y < c.height; y++) {
    const range = (1 - y / c.height) * 6000;
    for (let x = 0; x < c.width; x++) {
      const [r, gr, b] = colour(x, range, y);
      img.data.set([r, gr, b, 255], (y * c.width + x) * 4);
    }
  }
  g.putImageData(img, 0, 0);
}

function drawBackscatter() {
  const level = [[0, 0.4], [60, 0.8], [150, 1], [300, 1.08], [430, 1], [520, 0.8], [700, 0.55], [900, 0.4], [1100, 0.36], [1200, 0.2], [1450, 0.08], [1600, 0], [2800, 0.02], [3700, 0.12], [4300, 0.42], [4700, 0.6], [5000, 0.68], [5300, 0.85], [6000, 0.95]];
  const dots = [[0, 0], [1800, 0], [2400, 0.01], [2800, 0.035], [3100, 0.09], [3600, 0.16], [5000, 0.15], [6000, 0.2]];
  paint('backscatter', (x, r) => {
    if (rnd() < lerpTable(dots, r)) return [0, 20, 0];
    const amp = r < 1600 ? 0.04 : 0.05 + Math.max(0, r - 2500) / 3500 * 0.3;
    const t = lerpTable(level, r) + noise() * amp;
    return t > 1 ? [255, 255 - (t - 1) * 160, 40] : warm(Math.max(0, t));
  });
}

function drawDoppler() {
  const n = 477;
  const drift = wander(n, 0.7, 0.16), slow = wander(n, 0.97, 0.03);
  const blobs = [wander(n, 0.9, 0.16), wander(n, 0.9, 0.16), wander(n, 0.93, 0.12)];
  const bias = drift.map(b => clamp(0.56 + b + noise() * 0.4, 0.08, 0.98));
  const depth = bias.map(() => 2660 + noise() * 110);
  const tint = bias.map(() => rnd());
  const reach = bias.map(() => 0.15 + rnd() * rnd() * 1.3);
  const others = [[0, 0, 0], [0, 0, 0], [10, 10, 10], [20, 200, 60], [0, 255, 0], [255, 230, 40], [200, 255, 20], [120, 60, 190], [150, 140, 160], [200, 0, 90], [230, 20, 40], [60, 90, 180], [210, 190, 180]];
  paint('doppler', (x, r, y) => {
    if (y === 265) return Math.floor(x / 3) % 2 ? [0, 160, 60] : [0, 20, 10];
    if (r > depth[x]) {
      if (rnd() < bias[x]) return [255, 0, 255];
      if (tint[x] > 0.75 && rnd() < 0.5) return warm(0.5 + rnd() * 0.8);
      return others[Math.floor(rnd() * others.length)];
    }
    if (r > 1300) {
      const k = (r - 1300) / 1360;
      const q = rnd();
      if (q < k * k * k * reach[x]) return [225, 20, 150];
      if (q > 1 - k * k * 0.06) return [40, 190, 90];
      return warm(0.58 + k * 0.34 + noise() * (0.05 + k * 0.55) + slow[x] * (0.2 + k * 0.6));
    }
    if (r < 190) return warm(0.3 + blobs[Math.floor(r / 64)][x]);
    return warm(0.58 + 0.1 * Math.sin(x / 150 - 0.3) + noise() * (0.03 + clamp((r - 900) / 8000, 0, 0.05)) + (bias[x] - 0.56) * 0.03 + slow[x] * 0.2 + (r < 450 ? (450 - r) / 3000 : 0));
  });
}

drawAscope();
drawVelocity();
drawBackscatter();
drawDoppler();
```
